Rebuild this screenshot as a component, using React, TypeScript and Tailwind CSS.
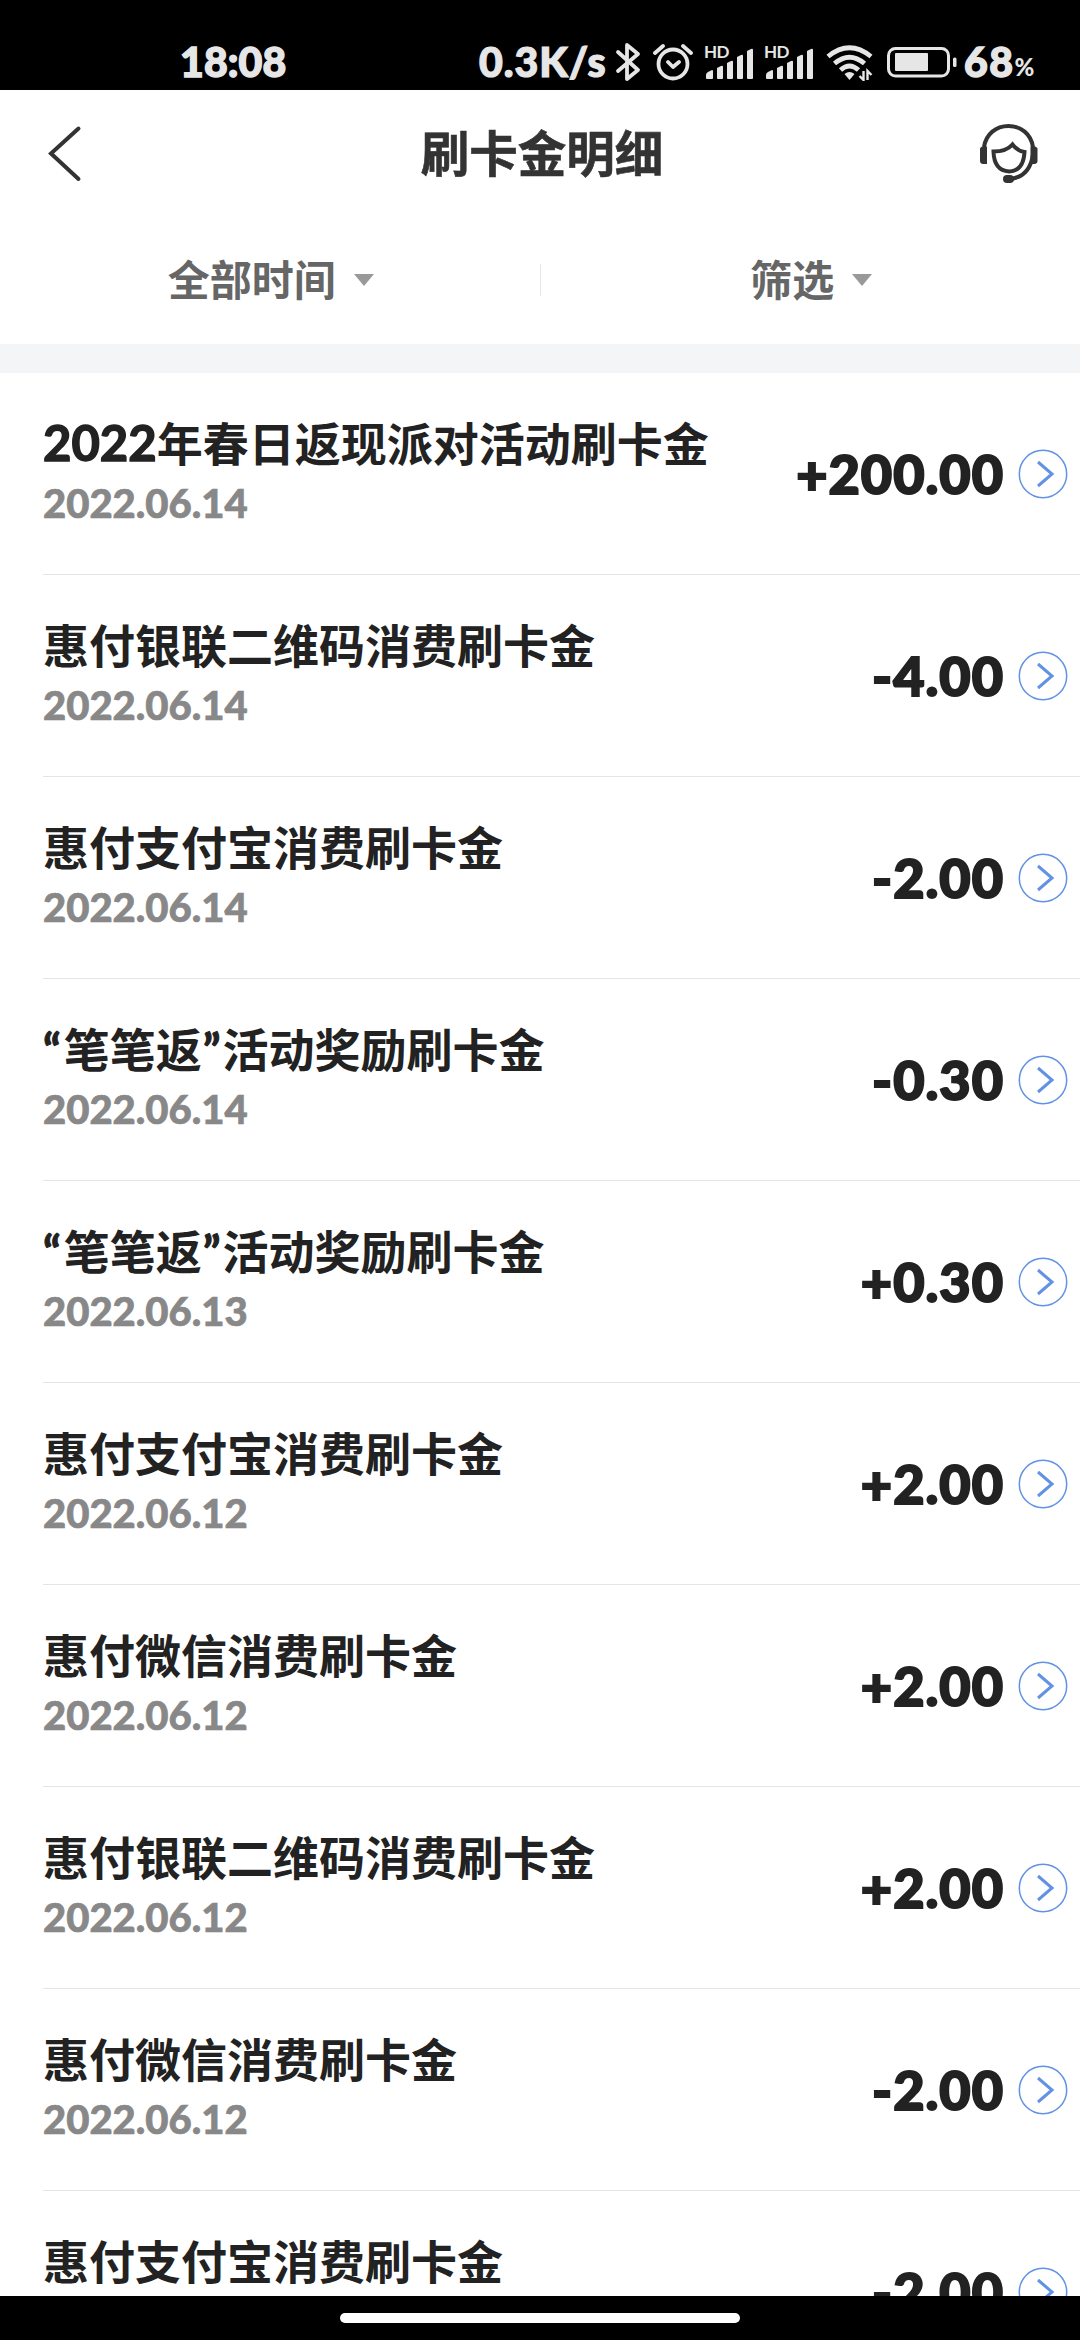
import React from "react";

interface RecordItem {
  year?: string;
  quoted?: string;
  title: string;
  date: string;
  amount: string;
}

const records: RecordItem[] = [
  { year: "2022", title: "年春日返现派对活动刷卡金", date: "2022.06.14", amount: "+200.00" },
  { title: "惠付银联二维码消费刷卡金", date: "2022.06.14", amount: "-4.00" },
  { title: "惠付支付宝消费刷卡金", date: "2022.06.14", amount: "-2.00" },
  { quoted: "笔笔返", title: "活动奖励刷卡金", date: "2022.06.14", amount: "-0.30" },
  { quoted: "笔笔返", title: "活动奖励刷卡金", date: "2022.06.13", amount: "+0.30" },
  { title: "惠付支付宝消费刷卡金", date: "2022.06.12", amount: "+2.00" },
  { title: "惠付微信消费刷卡金", date: "2022.06.12", amount: "+2.00" },
  { title: "惠付银联二维码消费刷卡金", date: "2022.06.12", amount: "+2.00" },
  { title: "惠付微信消费刷卡金", date: "2022.06.12", amount: "-2.00" },
  { title: "惠付支付宝消费刷卡金", date: "2022.06.12", amount: "-2.00" },
];

function Signal() {
  return (
    <div className="relative h-[34px] w-[50px] shrink-0">
      <span className="absolute left-0 top-0 text-[17px] leading-[14px] font-bold tracking-[-0.5px]">HD</span>
      <svg viewBox="0 0 50 34" className="h-[34px] w-[50px]" fill="currentColor">
        <path d="M2 33v-3q0-2 2-3l4-2q1 0 1 1v7q0 1-1 1H3q-1 0-1-1z" />
        <path d="M13 33V23l4-2q2-1 2 1v11q0 1-1 1h-4q-1 0-1-1z" />
        <path d="M23 33V18l4-2q2-1 2 1v16q0 1-1 1h-4q-1 0-1-1z" />
        <path d="M33 33V12l4-2q2-1 2 1v22q0 1-1 1h-4q-1 0-1-1z" />
        <path d="M43 33V6l4-2q2-1 2 1v28q0 1-1 1h-4q-1 0-1-1z" />
      </svg>
    </div>
  );
}

function StatusBar() {
  return (
    <div className="flex h-[90px] shrink-0 bg-black pt-[40px] text-[#e6e6e6]">
      <div className="flex w-full items-start pl-[180px]">
        <span className="w-[299px] text-[41px] leading-[44px] font-black tracking-[0.1px] [-webkit-text-stroke:1.4px_currentColor]">18:08</span>
        <span className="w-[136px] text-[41px] leading-[44px] font-black tracking-[1px] [-webkit-text-stroke:1.2px_currentColor]">0.3K/s</span>

        {/* Bluetooth */}
        <svg viewBox="0 0 26 40" className="mt-[2px] h-[40px] w-[26px] shrink-0" fill="none" stroke="currentColor" strokeWidth="3.8" strokeLinecap="round" strokeLinejoin="round">
          <path d="M3 10l20 18-11 9V3l11 9L3 29" />
        </svg>

        {/* Alarm */}
        <svg viewBox="0 0 40 38" className="ml-[12px] mt-[3px] h-[38px] w-[40px] shrink-0" fill="none" stroke="currentColor" strokeWidth="3.8" strokeLinecap="round" strokeLinejoin="round">
          <circle cx="20" cy="21" r="14.5" />
          <path d="M15 19l5 5 6-5M2 10l8-7M30 3l8 7" />
        </svg>

        <div className="ml-[11px] mt-[5px] flex gap-[10px]">
          <Signal />
          <Signal />
        </div>

        {/* Wifi with the up/down arrows */}
        <svg viewBox="0 0 48 36" className="ml-[12px] mt-[5px] h-[36px] w-[48px] shrink-0" fill="none" stroke="currentColor" strokeWidth="4.8">
          <path d="M2 11.5Q23.500-6 45 11.500" />
          <path d="M8.500 18.500Q23.500 6 38.500 18.500" />
          <path d="M14.500 25Q23.500 17 32.500 25" />
          <path d="M18.500 29q5-4 10 0l-5 6z" fill="currentColor" stroke="none" />
          <path d="M37.500 26v9l-4-4M41.500 35v-9l4 4" strokeWidth="2.400" />
        </svg>

        {/* Battery */}
        <svg viewBox="0 0 70 32" className="ml-[13px] mt-[6px] h-[32px] w-[70px] shrink-0">
          <rect x="1.500" y="2.500" width="60" height="27.500" rx="7" fill="none" stroke="currentColor" strokeWidth="3" />
          <rect x="8" y="7" width="33" height="18" rx="1" fill="currentColor" />
          <rect x="66" y="11.500" width="3.500" height="9.500" rx="1.500" fill="currentColor" />
        </svg>
        <span className="ml-[7px] text-[41px] leading-[44px] font-black tracking-[1.4px] [-webkit-text-stroke:1.4px_currentColor]">68</span>
        <span className="mt-[2px] text-[24px] leading-[50px] font-black">%</span>
      </div>
    </div>
  );
}

function Header() {
  return (
    <div className="flex h-[126px] shrink-0 items-center justify-between pl-[46px] pr-[40px]">
      <svg viewBox="0 0 38 60" className="h-[60px] w-[38px]" fill="none" stroke="#333" strokeWidth="4" strokeLinecap="round" strokeLinejoin="miter">
        <path d="M32.500 5.500L5 30.500l27.500 25.500" />
      </svg>
      <h1 className="pl-[22px] text-[48.500px] leading-[60px] font-bold text-[#333] [-webkit-text-stroke:0.6px_currentColor]">刷卡金明细</h1>
      {/* Customer service */}
      <svg viewBox="0 0 62 60" className="h-[60px] w-[62px]" fill="none" stroke="#333" strokeWidth="4">
        <path d="M6 24C8 11 18 3 30.500 3S53 11 55 24v7C53 46 45 55 31 56" />
        <path d="M2 26q0-2 3-2.500h4V41H5q-3-.5-3-3zM59.500 26q0-2-3-2.500h-4V41h4q3-.5 3-3z" fill="#333" stroke="none" />
        <path d="M15.500 28.500q13 0 19-7 5 6.500 12 7.500-1 19-15.500 19.500-15-1-15.500-20z" />
        <rect x="25" y="52" width="11" height="8" rx="4" fill="#333" stroke="none" />
      </svg>
    </div>
  );
}

function FilterTab({ label }: { label: string }) {
  return (
    <button className="flex flex-1 items-center justify-center pl-[2px] text-[42px] leading-[60px] font-bold text-[#666]">
      {label}
      <svg viewBox="0 0 20 12" className="ml-[18px] h-[12px] w-[20px]" fill="#999">
        <path d="M0 0h20L10 12z" />
      </svg>
    </button>
  );
}

function RecordRow({ item }: { item: RecordItem }) {
  return (
    <div className="ml-[43px] flex h-[202px] shrink-0 items-center justify-between border-b border-[#e5e5e5] pr-[12px]">
      <div className="pb-[5px]">
        <p className="h-[64px] text-[46px] leading-[64px] font-bold whitespace-nowrap text-[#222]">
          {item.year && <span className="text-[49px] leading-[60px] [-webkit-text-stroke:1.4px_currentColor]">{item.year}</span>}
          {item.quoted && (
            <>
              <span className="tracking-[3px] [-webkit-text-stroke:1px_currentColor]">“</span>
              {item.quoted}
              <span className="pl-[1px] tracking-[2px] [-webkit-text-stroke:1px_currentColor]">”</span>
            </>
          )}
          {item.title}
        </p>
        <p className="h-[54px] text-[40px] leading-[54px] font-black text-[#888] [-webkit-text-stroke:0.7px_currentColor]">{item.date}</p>
      </div>
      <div className="flex items-center">
        <span className="text-[54px] leading-[60px] font-black tracking-[1px] text-[#222] [-webkit-text-stroke:2px_currentColor]">{item.amount}</span>
        <svg viewBox="0 0 50 50" className="ml-[14px] h-[50px] w-[50px]" fill="none" stroke="#6292e4">
          <circle cx="25" cy="25" r="23.700" strokeWidth="1.500" />
          <path d="M20 13l14 12-14 12" strokeWidth="3" />
        </svg>
      </div>
    </div>
  );
}

export default function App() {
  return (
    <div className="flex h-[2340px] w-[1080px] flex-col overflow-hidden bg-white font-['Lato','Noto_Sans_CJK_SC',sans-serif]">
      <StatusBar />
      <Header />

      {/* Filters */}
      <div className="flex h-[128px] shrink-0 items-center">
        <FilterTab label="全部时间" />
        <div className="h-[32px] w-px bg-[#e8e8e8]" />
        <FilterTab label="筛选" />
      </div>
      <div className="h-[29px] shrink-0 bg-[#f4f5f7]" />

      {/* Records */}
      <div className="flex min-h-0 flex-1 flex-col overflow-hidden">
        {records.map((item, i) => (
          <RecordRow key={i} item={item} />
        ))}
      </div>

      {/* Gesture bar */}
      <div className="flex h-[44px] shrink-0 justify-center bg-black pt-[17px]">
        <div className="h-[10px] w-[400px] rounded-full bg-white" />
      </div>
    </div>
  );
}
